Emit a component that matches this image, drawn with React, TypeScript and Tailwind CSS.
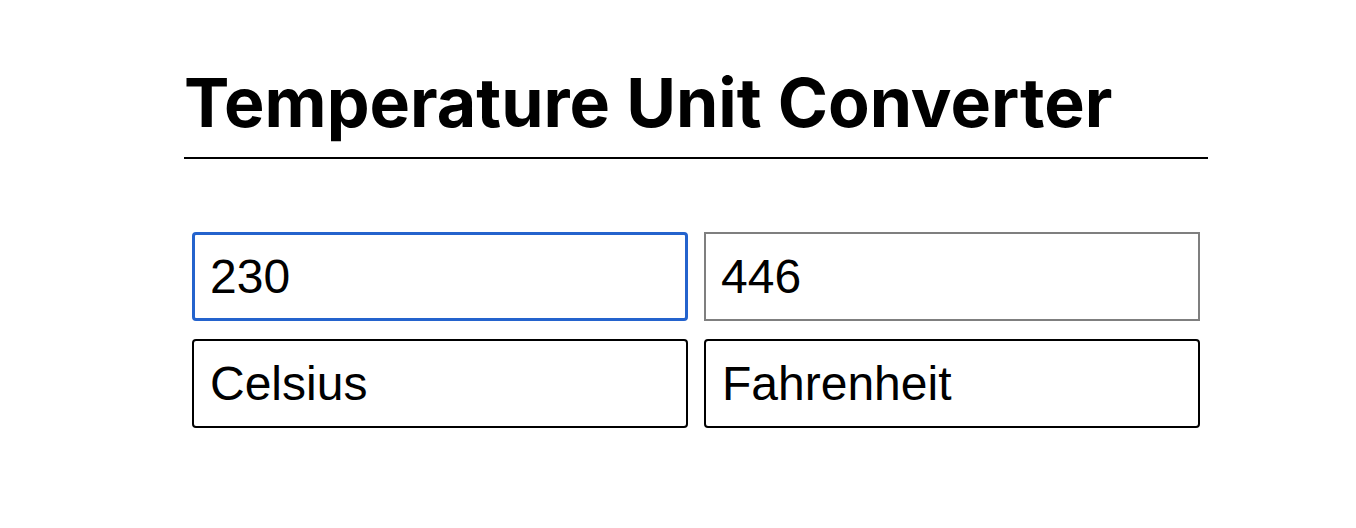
import React, { useState } from "react";

export default function App() {
  const [celsius, setCelsius] = useState("230");
  const fahrenheit = celsius === "" ? "" : String(Math.round((parseFloat(celsius) * 9) / 5 + 32));

  return (
    <div className="min-h-screen bg-white font-['Liberation_Sans',Arial,sans-serif] text-black">
      <div className="ml-[184px] w-[1024px] pt-[62px]">
        <h1 className="font-['Inter',sans-serif] text-[68px] font-bold leading-[80px]">
          Temperature Unit Converter
        </h1>
        <div className="mt-[15px] h-[2px] bg-black" />

        <div className="ml-[8px] mt-[73px] grid w-[1008px] grid-cols-[496px_496px] gap-x-[16px] gap-y-[18px]">
          <input
            value={celsius}
            onChange={(e) => setCelsius(e.target.value)}
            className="h-[89px] rounded-[4px] border-[3px] border-[#2463cd] px-[15px] text-[48px] outline-none"
          />
          <input
            value={fahrenheit}
            readOnly
            className="h-[89px] border-2 border-[#7f7f7f] px-[15px] text-[48px] outline-none"
          />
          <div className="flex h-[89px] items-center rounded-[4px] border-2 border-black px-[16px] text-[48px]">
            Celsius
          </div>
          <div className="flex h-[89px] items-center rounded-[4px] border-2 border-black px-[16px] text-[48px]">
            Fahrenheit
          </div>
        </div>
      </div>
    </div>
  );
}
